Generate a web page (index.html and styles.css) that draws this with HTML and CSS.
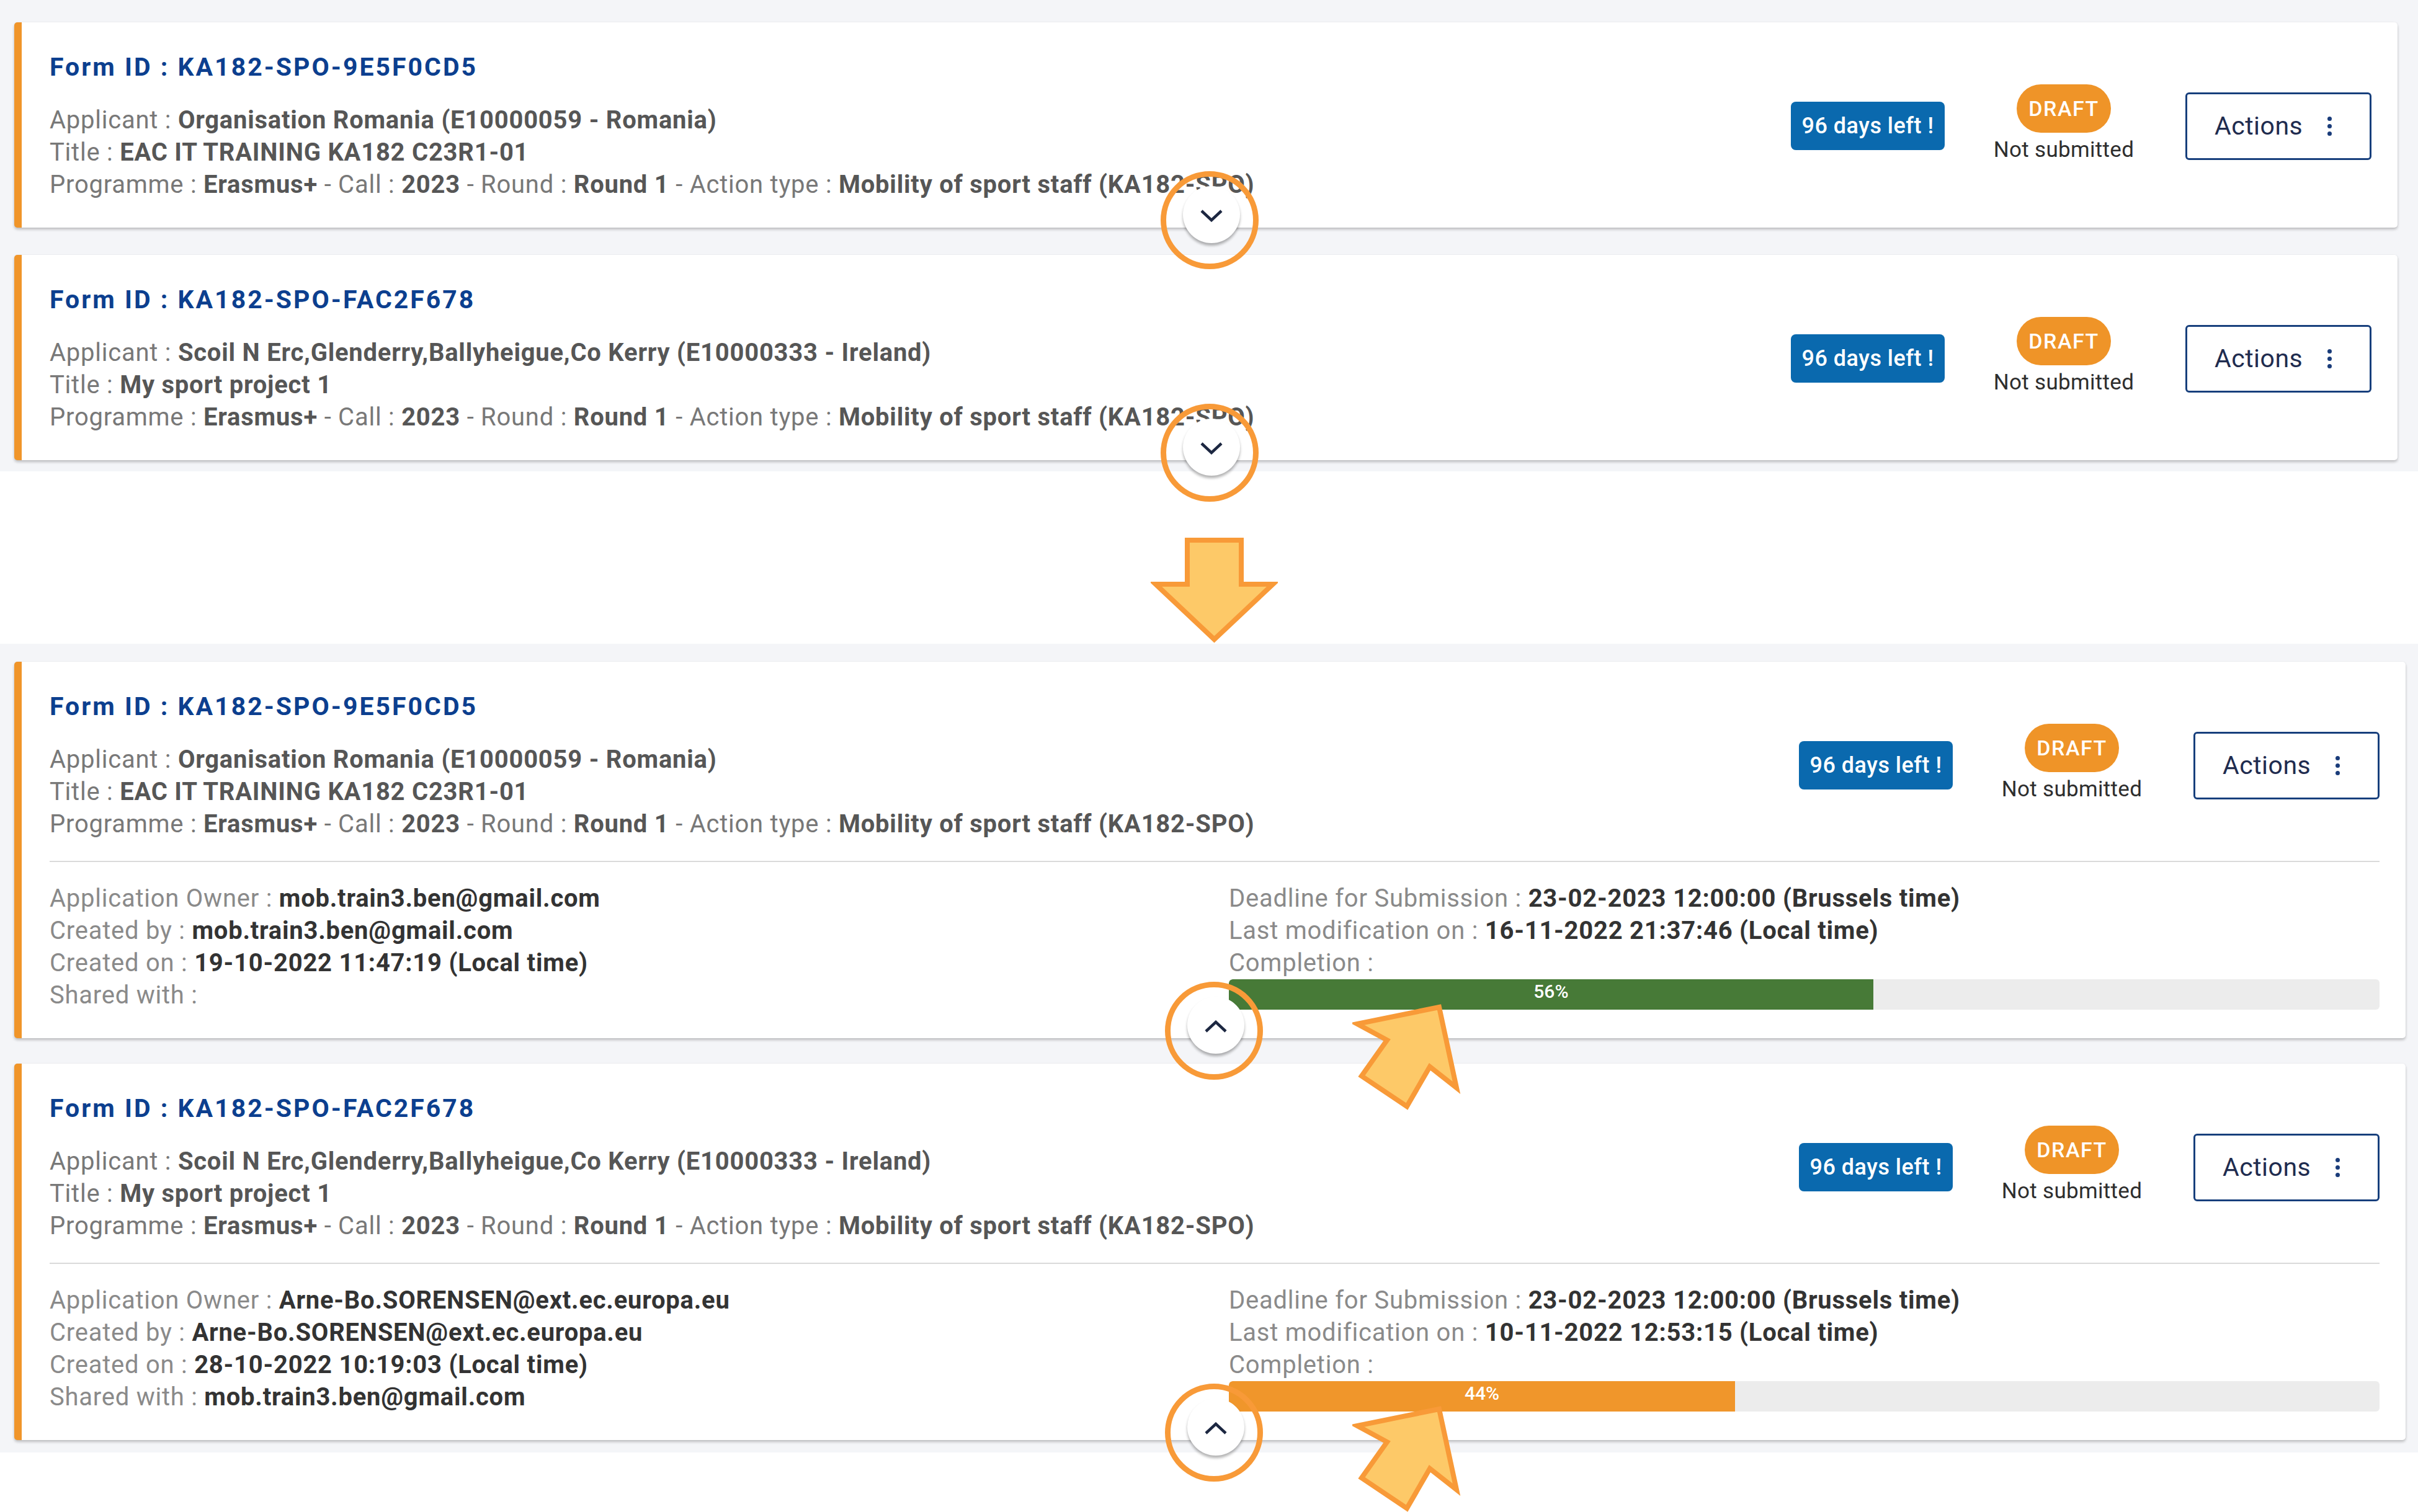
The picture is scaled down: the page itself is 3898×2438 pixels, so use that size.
FILE: index.html
```html
<!DOCTYPE html>
<html lang="en">
<head>
  <meta charset="UTF-8">
  <title>My applications - collapse / expand</title>
  <link rel="stylesheet" href="styles.css">
</head>
<body>

  <!-- collapsed view -->
  <section class="shot shot-top">
    <div class="card">
      <div class="card-head">
        <div class="info">
          <h3 class="form-id">Form ID : KA182-SPO-9E5F0CD5</h3>
          <p><span class="lbl">Applicant : </span><b>Organisation Romania (E10000059 - Romania)</b></p>
          <p><span class="lbl">Title : </span><b>EAC IT TRAINING KA182 C23R1-01</b></p>
          <p><span class="lbl">Programme : </span><b>Erasmus+</b><span class="lbl"> - Call : </span><b>2023</b><span class="lbl"> - Round : </span><b>Round 1</b><span class="lbl"> - Action type : </span><b>Mobility of sport staff (KA182-SPO)</b></p>
        </div>
        <div class="side">
          <span class="days">96 days left !</span>
          <div class="status"><span class="draft">DRAFT</span><span class="not-sub">Not submitted</span></div>
          <button class="actions">Actions <span class="kebab"><i></i><i></i><i></i></span></button>
        </div>
      </div>
      <button class="toggle"><svg width="36" height="20" viewBox="0 0 36 20"><polyline points="2,2 18,17 34,2" fill="none" stroke="#1c2741" stroke-width="4.5"/></svg></button>
      <span class="ring"></span>
    </div>

    <div class="card">
      <div class="card-head">
        <div class="info">
          <h3 class="form-id">Form ID : KA182-SPO-FAC2F678</h3>
          <p><span class="lbl">Applicant : </span><b>Scoil N Erc,Glenderry,Ballyheigue,Co Kerry (E10000333 - Ireland)</b></p>
          <p><span class="lbl">Title : </span><b>My sport project 1</b></p>
          <p><span class="lbl">Programme : </span><b>Erasmus+</b><span class="lbl"> - Call : </span><b>2023</b><span class="lbl"> - Round : </span><b>Round 1</b><span class="lbl"> - Action type : </span><b>Mobility of sport staff (KA182-SPO)</b></p>
        </div>
        <div class="side">
          <span class="days">96 days left !</span>
          <div class="status"><span class="draft">DRAFT</span><span class="not-sub">Not submitted</span></div>
          <button class="actions">Actions <span class="kebab"><i></i><i></i><i></i></span></button>
        </div>
      </div>
      <button class="toggle"><svg width="36" height="20" viewBox="0 0 36 20"><polyline points="2,2 18,17 34,2" fill="none" stroke="#1c2741" stroke-width="4.5"/></svg></button>
      <span class="ring"></span>
    </div>
  </section>

  <section class="shot-gap">
    <svg class="big-arrow" width="205" height="176" viewBox="0 0 205 176">
      <polygon points="59,8 146,8 146,79 197,79 102.5,168 8,79 59,79" fill="#fdc968" stroke="#f89a38" stroke-width="8"/>
    </svg>
  </section>

  <!-- expanded view -->
  <section class="shot shot-bottom">
    <div class="card">
      <div class="card-head">
        <div class="info">
          <h3 class="form-id">Form ID : KA182-SPO-9E5F0CD5</h3>
          <p><span class="lbl">Applicant : </span><b>Organisation Romania (E10000059 - Romania)</b></p>
          <p><span class="lbl">Title : </span><b>EAC IT TRAINING KA182 C23R1-01</b></p>
          <p><span class="lbl">Programme : </span><b>Erasmus+</b><span class="lbl"> - Call : </span><b>2023</b><span class="lbl"> - Round : </span><b>Round 1</b><span class="lbl"> - Action type : </span><b>Mobility of sport staff (KA182-SPO)</b></p>
        </div>
        <div class="side">
          <span class="days">96 days left !</span>
          <div class="status"><span class="draft">DRAFT</span><span class="not-sub">Not submitted</span></div>
          <button class="actions">Actions <span class="kebab"><i></i><i></i><i></i></span></button>
        </div>
      </div>
      <hr class="sep">
      <div class="details">
        <div>
          <p><span class="lbl">Application Owner : </span><b>mob.train3.ben@gmail.com</b></p>
          <p><span class="lbl">Created by : </span><b>mob.train3.ben@gmail.com</b></p>
          <p><span class="lbl">Created on : </span><b>19-10-2022 11:47:19 (Local time)</b></p>
          <p><span class="lbl">Shared with : </span></p>
        </div>
        <div>
          <p><span class="lbl">Deadline for Submission : </span><b>23-02-2023 12:00:00 (Brussels time)</b></p>
          <p><span class="lbl">Last modification on : </span><b>16-11-2022 21:37:46 (Local time)</b></p>
          <p><span class="lbl">Completion : </span></p>
          <div class="bar"><div class="fill green" style="width: 56%">56%</div></div>
        </div>
      </div>
      <button class="toggle"><svg width="36" height="20" viewBox="0 0 36 20"><polyline points="2,18 18,3 34,18" fill="none" stroke="#1c2741" stroke-width="4.5"/></svg></button>
      <span class="ring"></span>
      <svg class="pointer" width="180" height="180" viewBox="0 0 180 180">
        <polygon points="140,10 8,37 56,63 15,121 88,170 125,106 168,140" fill="#fdc968" stroke="#f89a38" stroke-width="8"/>
      </svg>
    </div>

    <div class="card">
      <div class="card-head">
        <div class="info">
          <h3 class="form-id">Form ID : KA182-SPO-FAC2F678</h3>
          <p><span class="lbl">Applicant : </span><b>Scoil N Erc,Glenderry,Ballyheigue,Co Kerry (E10000333 - Ireland)</b></p>
          <p><span class="lbl">Title : </span><b>My sport project 1</b></p>
          <p><span class="lbl">Programme : </span><b>Erasmus+</b><span class="lbl"> - Call : </span><b>2023</b><span class="lbl"> - Round : </span><b>Round 1</b><span class="lbl"> - Action type : </span><b>Mobility of sport staff (KA182-SPO)</b></p>
        </div>
        <div class="side">
          <span class="days">96 days left !</span>
          <div class="status"><span class="draft">DRAFT</span><span class="not-sub">Not submitted</span></div>
          <button class="actions">Actions <span class="kebab"><i></i><i></i><i></i></span></button>
        </div>
      </div>
      <hr class="sep">
      <div class="details">
        <div>
          <p><span class="lbl">Application Owner : </span><b>Arne-Bo.SORENSEN@ext.ec.europa.eu</b></p>
          <p><span class="lbl">Created by : </span><b>Arne-Bo.SORENSEN@ext.ec.europa.eu</b></p>
          <p><span class="lbl">Created on : </span><b>28-10-2022 10:19:03 (Local time)</b></p>
          <p><span class="lbl">Shared with : </span><b>mob.train3.ben@gmail.com</b></p>
        </div>
        <div>
          <p><span class="lbl">Deadline for Submission : </span><b>23-02-2023 12:00:00 (Brussels time)</b></p>
          <p><span class="lbl">Last modification on : </span><b>10-11-2022 12:53:15 (Local time)</b></p>
          <p><span class="lbl">Completion : </span></p>
          <div class="bar"><div class="fill orange" style="width: 44%">44%</div></div>
        </div>
      </div>
      <button class="toggle"><svg width="36" height="20" viewBox="0 0 36 20"><polyline points="2,18 18,3 34,18" fill="none" stroke="#1c2741" stroke-width="4.5"/></svg></button>
      <span class="ring"></span>
      <svg class="pointer" width="180" height="180" viewBox="0 0 180 180">
        <polygon points="140,10 8,37 56,63 15,121 88,170 125,106 168,140" fill="#fdc968" stroke="#f89a38" stroke-width="8"/>
      </svg>
    </div>
  </section>

</body>
</html>
```

FILE: styles.css
```css
body {
  margin: 0;
  padding: 0 0 96px 0;
  background-color: white;
  font-family: Roboto, "Liberation Sans", sans-serif;
  font-size: 40px;
  line-height: 52px;
  letter-spacing: 0.75px;
  color: #333;
}

p {
  margin: 0;
}

b {
  font-weight: 700;
}

.shot {
  background-color: #f4f5f8;
  display: flex;
  flex-direction: column;
}

.shot-top {
  padding: 36px 33px 18px 23px;
  gap: 44px;
}

.shot-bottom {
  padding: 29px 20px 20px 23px;
  gap: 41px;
}

.shot-gap {
  height: 278px;
  display: flex;
  justify-content: center;
  align-items: flex-start;
  padding-left: 16px;
}

.big-arrow {
  margin-top: 103px;
}

.card {
  position: relative;
  background-color: white;
  border-left: 12px solid #f0952a;
  border-radius: 5px;
  padding: 46px 42px 43px 45px;
  box-shadow: 0 3px 4px rgba(0, 0, 0, 0.22), 0 0 2px rgba(0, 0, 0, 0.08);
}

.card-head {
  display: flex;
  align-items: center;
  justify-content: space-between;
}

.form-id {
  margin: 0 0 33px 0;
  font-size: 41px;
  line-height: 53px;
  letter-spacing: 3px;
  font-weight: 700;
  color: #0c3f8f;
}

.info .lbl {
  color: #787878;
}

.info b {
  color: #565656;
}

.side {
  display: flex;
  align-items: center;
  letter-spacing: 0.5px;
}

.days {
  width: 248px;
  height: 78px;
  display: flex;
  align-items: center;
  justify-content: center;
  background-color: #0a69ae;
  color: white;
  border-radius: 8px;
  font-size: 36px;
  font-weight: 500;
}

.status {
  width: 232px;
  margin: 0 80px 0 76px;
  display: flex;
  flex-direction: column;
  align-items: center;
  white-space: nowrap;
}

.draft {
  width: 152px;
  height: 78px;
  display: flex;
  align-items: center;
  justify-content: center;
  background-color: #ef9428;
  color: white;
  border-radius: 39px;
  font-size: 34px;
  letter-spacing: 1.5px;
  font-weight: 500;
}

.not-sub {
  font-size: 35px;
  line-height: 56px;
  letter-spacing: 0.3px;
  color: #2e2e2e;
}

.actions {
  width: 300px;
  height: 109px;
  display: flex;
  align-items: center;
  gap: 40px;
  padding: 0 0 0 44px;
  background-color: white;
  border: 3px solid #173f7c;
  border-radius: 6px;
  font-family: Roboto, "Liberation Sans", sans-serif;
  font-size: 41px;
  letter-spacing: 0.5px;
  color: #1f2c4f;
}

.kebab {
  display: flex;
  flex-direction: column;
  gap: 5px;
}

.kebab i {
  display: block;
  width: 7px;
  height: 7px;
  border-radius: 50%;
  background-color: #1a3c7a;
}

.sep {
  margin: 33px 0;
  border: none;
  height: 2px;
  background-color: #dadada;
}

.details {
  display: grid;
  grid-template-columns: 1fr 1fr;
  column-gap: 46px;
}

.details .lbl {
  color: #8a8a8a;
}

.details b {
  color: #333;
}

.bar {
  height: 49px;
  background-color: #ececec;
  border-radius: 6px;
  overflow: hidden;
}

.fill {
  height: 100%;
  border-radius: 6px 0 0 6px;
  color: white;
  font-size: 30px;
  font-weight: 500;
  line-height: 40px;
  letter-spacing: 0;
  text-align: center;
}

.fill.green {
  background-color: #477a37;
}

.fill.orange {
  background-color: #f0962b;
}

.toggle {
  position: absolute;
  left: calc(50% + 3px);
  bottom: -25px;
  transform: translateX(-50%);
  width: 92px;
  height: 92px;
  border: none;
  border-radius: 50%;
  background-color: white;
  box-shadow: 0 4px 4px rgba(0, 0, 0, 0.3);
  display: flex;
  align-items: center;
  justify-content: center;
  padding: 4px 0 0 0;
  z-index: 1;
}

.ring {
  position: absolute;
  left: 50%;
  bottom: -67px;
  transform: translateX(-50%);
  width: 158px;
  height: 158px;
  box-sizing: border-box;
  border: 9px solid #f89a38;
  border-radius: 50%;
  z-index: 2;
}

.pointer {
  position: absolute;
  left: 2145px;
  top: 547px;
  z-index: 3;
}
```
